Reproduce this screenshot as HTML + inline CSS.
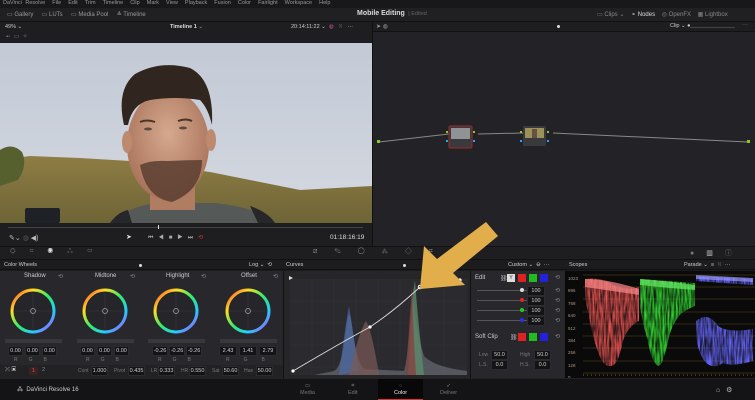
<!DOCTYPE html>
<html><head><meta charset="utf-8"><style>
*{margin:0;padding:0;box-sizing:border-box}
body{width:755px;height:400px;overflow:hidden;background:#1c1c1f;font-family:"Liberation Sans",sans-serif;color:#b8b8b8;font-size:6px;position:relative}
.a{position:absolute}
.t{position:absolute;white-space:nowrap}
.box{position:absolute;background:#141416;border:1px solid #2c2c30;color:#d0d0d0;font-size:5.5px;text-align:center;line-height:9px;height:10px}
.lbl{position:absolute;font-size:5px;color:#777}
</style></head><body>
<div class="a" style="left:0;top:0;width:755px;height:8px;background:#18181a"></div>
<div class="t" style="left:3px;top:0;font-size:5.5px;color:#999;word-spacing:2px">DaVinci Resolve &nbsp;File &nbsp;Edit &nbsp;Trim &nbsp;Timeline &nbsp;Clip &nbsp;Mark &nbsp;View &nbsp;Playback &nbsp;Fusion &nbsp;Color &nbsp;Fairlight &nbsp;Workspace &nbsp;Help</div>
<div class="a" style="left:0;top:8px;width:755px;height:14px;background:#202023;border-bottom:1px solid #111"></div>
<div class="t" style="left:7px;top:11px;font-size:6px;color:#999">▭ Gallery &nbsp;&nbsp;&nbsp; ▭ LUTs &nbsp;&nbsp;&nbsp; ▭ Media Pool &nbsp;&nbsp;&nbsp; ≛ Timeline</div>
<div class="t" style="left:357px;top:10px;font-size:7px;color:#ddd;font-weight:bold">Mobile Editing <span style="font-weight:normal;color:#666;font-size:5.5px">&nbsp;| Edited</span></div>
<div class="t" style="left:597px;top:11px;font-size:6px;color:#888">▭ Clips ⌄ &nbsp;&nbsp; <span style="color:#ddd">⚬ Nodes</span> &nbsp;&nbsp; ◎ OpenFX &nbsp;&nbsp; ▦ Lightbox</div>
<div class="a" style="left:0;top:22px;width:372px;height:20px;background:#1e1e21"></div>
<div class="t" style="left:5px;top:24px;font-size:5.5px;color:#ccc">49% ⌄</div>
<div class="t" style="left:170px;top:24px;font-size:5.5px;color:#ddd;font-weight:bold">Timeline 1 <span style="color:#777">⌄</span></div>
<div class="t" style="left:291px;top:24px;font-size:5.5px;color:#ccc">20:14:11:22 ⌄ &nbsp;<span style="color:#c5a">◍</span> &nbsp; ⁙ &nbsp; ···</div>
<div class="t" style="left:6px;top:33px;font-size:6px;color:#777">▪▫ &nbsp;▭ &nbsp;✧</div>
<svg class="a" style="left:0;top:43px" width="372" height="180" viewBox="0 43 372 180">
<defs><linearGradient id="sky" x1="0" y1="0" x2="0" y2="1"><stop offset="0" stop-color="#c3cad6"/><stop offset="1" stop-color="#d4d8e0"/></linearGradient>
<linearGradient id="hill" x1="0" y1="0" x2="0" y2="1"><stop offset="0" stop-color="#8e7d44"/><stop offset="1" stop-color="#6e6436"/></linearGradient>
<radialGradient id="skin" cx="0.5" cy="0.4" r="0.6"><stop offset="0" stop-color="#d6a98e"/><stop offset="1" stop-color="#a8725a"/></radialGradient></defs>
<rect x="0" y="43" width="372" height="180" fill="url(#sky)"/>
<path d="M0 160 L30 156 L80 158 L130 161 L210 172 L260 182 L300 190 L372 186 L372 223 L0 223Z" fill="url(#hill)"/>
<path d="M0 150 Q12 142 22 152 Q28 165 18 180 L0 186Z" fill="#55602e"/>
<rect x="25" y="208" width="35" height="15" rx="2" fill="#1e2226"/>
<path d="M110 223 Q130 205 160 203 L215 203 Q260 208 275 223Z" fill="#555a58"/>
<path d="M110 223 Q118 212 128 210 L132 223Z M250 206 Q268 212 275 223 L258 223Z" fill="#25272a"/>
<rect x="150" y="180" width="45" height="30" fill="#b07c62"/>
<ellipse cx="168" cy="145" rx="41" ry="55" fill="url(#skin)"/>
<ellipse cx="127" cy="142" rx="5" ry="11" fill="#bd8a70"/><ellipse cx="211" cy="140" rx="5" ry="11" fill="#bd8a70"/>
<path style="fill:#30261f" d="M124 125 Q116 90 135 74 Q160 60 190 68 Q214 80 212 125 Q208 108 200 100 Q175 96 150 100 Q132 104 128 125Z"/>
<path d="M140 165 Q150 160 168 161 Q188 160 202 160 Q202 190 172 202 Q146 198 140 165Z" fill="#5a3e30" opacity=".85"/>
<path d="M140 122 Q147 119 155 122 M178 121 Q186 118 192 121" stroke="#4a3428" stroke-width="2" fill="none"/>
<ellipse cx="148" cy="129" rx="4" ry="1.5" fill="#5b4a44"/><ellipse cx="183" cy="128" rx="4" ry="1.5" fill="#5b4a44"/>
</svg>
<div class="a" style="left:0;top:223px;width:372px;height:23px;background:#1e1e21"></div>
<div class="a" style="left:8px;top:227px;width:355px;height:1px;background:#444"></div>
<div class="a" style="left:158px;top:225px;width:1px;height:4px;background:#ddd"></div>
<div class="t" style="left:9px;top:234px;font-size:7px;color:#bbb">✎⌄ <span style="color:#555">◍</span> ◀)</div>
<div class="t" style="left:126px;top:233px;font-size:7px;color:#ddd">➤</div>
<div class="t" style="left:148px;top:234px;font-size:6px;color:#aaa;letter-spacing:5px">⏮◀■▶⏭<span style="color:#d33">⟲</span></div>
<div class="t" style="left:330px;top:234px;font-size:6.5px;color:#ddd">01:18:16:19</div>
<div class="a" style="left:372px;top:22px;width:1px;height:224px;background:#111"></div>
<div class="a" style="left:373px;top:22px;width:382px;height:10px;background:#1e1e21;border-bottom:1px solid #111"></div>
<div class="t" style="left:376px;top:23px;font-size:6px;color:#999">➤ ◍</div>
<div class="a" style="left:557px;top:25px;width:3px;height:3px;border-radius:50%;background:#ddd"></div>
<div class="t" style="left:670px;top:23px;font-size:5.5px;color:#ccc">Clip ⌄ ●</div>
<div class="a" style="left:690px;top:27px;width:45px;height:1px;background:#444"></div>
<div class="t" style="left:742px;top:22px;font-size:6px;color:#777">···</div>
<div class="a" style="left:373px;top:32px;width:382px;height:214px;background:#232327"></div>
<svg class="a" style="left:373px;top:32px" width="382" height="214">
<path d="M6 110 L76 102 M105 102 L150 101 M180 101 L375 110" stroke="#888" stroke-width="1" fill="none"/>
<rect x="4" y="108" width="3" height="3" fill="#8c2"/><rect x="374" y="108" width="3" height="3" fill="#8c2"/>
<rect x="76" y="94" width="23" height="22" rx="1.5" fill="#3a3a3e" stroke="#8a2a2a" stroke-width="1.2"/>
<rect x="78" y="96" width="19" height="11" fill="#8f9396"/>
<rect x="150" y="94" width="23" height="20" rx="1.5" fill="#3a3a3e"/>
<rect x="152" y="96" width="19" height="10" fill="#9a9258"/><rect x="159" y="97" width="5" height="9" fill="#6a5040"/>
<rect x="73" y="99" width="2" height="2" fill="#8c2"/><rect x="73" y="108" width="2" height="2" fill="#2ae"/>
<rect x="100" y="99" width="2" height="2" fill="#8c2"/><rect x="100" y="108" width="2" height="2" fill="#2ae"/>
<rect x="147" y="99" width="2" height="2" fill="#8c2"/><rect x="147" y="108" width="2" height="2" fill="#2ae"/>
<rect x="174" y="99" width="2" height="2" fill="#8c2"/><rect x="174" y="108" width="2" height="2" fill="#2ae"/>
</svg>
<div class="a" style="left:0;top:246px;width:755px;height:14px;background:#1e1e21;border-top:1px solid #111;border-bottom:1px solid #111"></div>
<div class="t" style="left:10px;top:248px;font-size:7px;color:#666;letter-spacing:14px">⛭⌗<span style="color:#ddd">◉</span>⁂▭</div>
<div class="t" style="left:313px;top:248px;font-size:7px;color:#888;letter-spacing:17px">⧄✎◯⁂◇⌗▭</div>
<div class="t" style="left:690px;top:248px;font-size:7px;color:#777;letter-spacing:12px">●<span style="color:#ccc">▥</span>ⓘ</div>
<div class="a" style="left:0;top:260px;width:755px;height:10px;background:#1c1c1f;border-bottom:1px solid #111"></div>
<div class="t" style="left:4px;top:262px;font-size:5.5px;color:#ccc">Color Wheels</div>
<div class="a" style="left:139px;top:264px;width:3px;height:3px;border-radius:50%;background:#ddd"></div>
<div class="t" style="left:249px;top:262px;font-size:5.5px;color:#ccc">Log ⌄ &nbsp;⟲</div>
<div class="t" style="left:286px;top:262px;font-size:5.5px;color:#ccc">Curves</div>
<div class="a" style="left:403px;top:264px;width:3px;height:3px;border-radius:50%;background:#ddd"></div>
<div class="t" style="left:508px;top:262px;font-size:5.5px;color:#ccc">Custom ⌄ &nbsp;⊖ &nbsp;···</div>
<div class="t" style="left:569px;top:262px;font-size:5.5px;color:#ccc">Scopes</div>
<div class="t" style="left:684px;top:262px;font-size:5.5px;color:#ccc">Parade ⌄ &nbsp;≡ &nbsp;⁙ &nbsp;···</div>
<div class="a" style="left:0;top:271px;width:283px;height:107px;background:#28282c"></div>
<svg class="a" style="left:0;top:271px" width="283" height="107">
<defs><linearGradient id="rb" x1="0" y1="0" x2="1" y2="1"><stop offset="0" stop-color="#f33"/><stop offset=".25" stop-color="#fd2"/><stop offset=".5" stop-color="#3e6"/><stop offset=".75" stop-color="#2cf"/><stop offset="1" stop-color="#c3f"/></linearGradient>
<g id="w"><circle r="21" fill="none" stroke="url(#rb)" stroke-width="3"/><circle r="19" fill="#26262a"/><path d="M0 -18 V18 M-18 0 H18" stroke="#3a3a3e" stroke-width=".6"/><circle r="2.5" fill="none" stroke="#aaa" stroke-width=".7"/></g></defs>
<use href="#w" x="33" y="40"/><use href="#w" x="105" y="40"/><use href="#w" x="176" y="40"/><use href="#w" x="248" y="40"/>
<rect x="5" y="68" width="57" height="4" fill="#38383c"/><rect x="77" y="68" width="57" height="4" fill="#38383c"/><rect x="148" y="68" width="57" height="4" fill="#38383c"/><rect x="220" y="68" width="57" height="4" fill="#38383c"/>
</svg>
<div class="t" style="left:24px;top:273px;font-size:6px;color:#ccc">Shadow</div>
<div class="t" style="left:95px;top:273px;font-size:6px;color:#ccc">Midtone</div>
<div class="t" style="left:166px;top:273px;font-size:6px;color:#ccc">Highlight</div>
<div class="t" style="left:241px;top:273px;font-size:6px;color:#ccc">Offset</div>
<div class="t" style="left:58px;top:273px;color:#888">⟲</div><div class="t" style="left:130px;top:273px;color:#888">⟲</div><div class="t" style="left:201px;top:273px;color:#888">⟲</div><div class="t" style="left:273px;top:273px;color:#888">⟲</div>
<div class="box" style="left:8px;top:346px;width:15px">0.00</div><div class="box" style="left:25px;top:346px;width:15px">0.00</div><div class="box" style="left:42px;top:346px;width:15px">0.00</div>
<div class="box" style="left:80px;top:346px;width:15px">0.00</div><div class="box" style="left:97px;top:346px;width:15px">0.00</div><div class="box" style="left:114px;top:346px;width:15px">0.00</div>
<div class="box" style="left:152px;top:346px;width:16px">-0.26</div><div class="box" style="left:169px;top:346px;width:16px">-0.26</div><div class="box" style="left:186px;top:346px;width:16px">-0.26</div>
<div class="box" style="left:219px;top:346px;width:18px">2.43</div><div class="box" style="left:239px;top:346px;width:18px">1.41</div><div class="box" style="left:259px;top:346px;width:18px">2.79</div>
<div class="lbl" style="left:14px;top:357px;letter-spacing:11px">RGB</div><div class="lbl" style="left:86px;top:357px;letter-spacing:11px">RGB</div><div class="lbl" style="left:158px;top:357px;letter-spacing:11px">RGB</div><div class="lbl" style="left:226px;top:357px;letter-spacing:14px">RGB</div>
<div class="a" style="left:0;top:365px;width:283px;height:13px;background:#222225"></div>
<div class="t" style="left:5px;top:367px;font-size:6px;color:#ccc">⤫ ▣</div>
<div class="a" style="left:29px;top:367px;width:9px;height:8px;background:#3a2222;color:#e55;font-size:5.5px;text-align:center;line-height:8px;border-radius:2px">1</div>
<div class="t" style="left:42px;top:367px;font-size:5.5px;color:#888">2</div>
<div class="t" style="left:78px;top:368px;font-size:5px;color:#777">Cont</div><div class="box" style="left:91px;top:366px;width:17px">1.000</div>
<div class="t" style="left:114px;top:368px;font-size:5px;color:#777">Pivot</div><div class="box" style="left:128px;top:366px;width:17px">0.435</div>
<div class="t" style="left:151px;top:368px;font-size:5px;color:#777">LR</div><div class="box" style="left:158px;top:366px;width:17px">0.333</div>
<div class="t" style="left:181px;top:368px;font-size:5px;color:#777">HR</div><div class="box" style="left:189px;top:366px;width:17px">0.550</div>
<div class="t" style="left:212px;top:368px;font-size:5px;color:#777">Sat</div><div class="box" style="left:222px;top:366px;width:17px">50.60</div>
<div class="t" style="left:244px;top:368px;font-size:5px;color:#777">Hue</div><div class="box" style="left:256px;top:366px;width:17px">50.00</div>
<div class="a" style="left:283px;top:271px;width:1px;height:107px;background:#111"></div>
<div class="a" style="left:284px;top:271px;width:186px;height:107px;background:#262629"></div>
<svg class="a" style="left:284px;top:271px" width="186" height="107">
<rect x="6" y="8" width="177" height="96" fill="#2b2b2f"/>
<path d="M28 8V104M50 8V104M72 8V104M94 8V104M116 8V104M138 8V104M160 8V104M6 30H183M6 52H183M6 74H183M6 96H183" stroke="#333338" stroke-width=".6"/>
<path d="M30 104 L50 100 Q58 96 62 60 Q65 30 68 55 Q72 90 80 98 L120 100 Q124 90 128 20 Q132 60 140 85 Q150 96 183 100 L183 104Z" fill="#8a8e98" opacity=".45"/>
<path d="M55 104 Q62 50 65 35 Q68 55 75 100Z" fill="#4a6aa8" opacity=".7"/>
<path d="M65 104 Q75 60 82 50 Q88 60 95 104Z" fill="#7a5a55" opacity=".7"/>
<path d="M124 104 Q128 20 131 10 Q134 50 140 104Z" fill="#5c8a6a" opacity=".8"/>
<path d="M122 104 Q126 40 128 15 Q129 60 132 104Z" fill="#8a3a3a" opacity=".7"/>
<path d="M9 100 Q60 70 86 56 Q110 40 136 16 Q150 10 175 9" stroke="#ddd" stroke-width=".9" fill="none"/>
<circle cx="9" cy="100" r="1.6" fill="#fff"/><circle cx="86" cy="56" r="1.6" fill="#fff"/><circle cx="136" cy="16" r="1.8" fill="none" stroke="#fff"/><circle cx="176" cy="9" r="1.6" fill="#fff"/>
<path d="M5 5 L9 7 L5 9Z" fill="#ddd"/>
</svg>
<div class="a" style="left:470px;top:271px;width:1px;height:107px;background:#111"></div>
<div class="a" style="left:471px;top:271px;width:94px;height:107px;background:#28282c"></div>
<div class="t" style="left:475px;top:275px;font-size:6px;color:#ccc">Edit</div>
<div class="t" style="left:500px;top:275px;font-size:6px;color:#bbb">⛓</div>
<div class="a" style="left:507px;top:274px;width:8px;height:8px;background:#ddd;color:#333;font-size:5px;text-align:center;line-height:8px">Y</div>
<div class="a" style="left:518px;top:274px;width:8px;height:8px;background:#d22"></div>
<div class="a" style="left:529px;top:274px;width:8px;height:8px;background:#2b2"></div>
<div class="a" style="left:540px;top:274px;width:8px;height:8px;background:#22d"></div>
<div class="t" style="left:555px;top:274px;color:#888">⟲</div>
<div class="a" style="left:477px;top:290px;width:50px;height:1px;background:#555"></div><div class="a" style="left:520px;top:288px;width:4px;height:4px;border-radius:50%;background:#ddd"></div>
<div class="a" style="left:477px;top:300px;width:50px;height:1px;background:#555"></div><div class="a" style="left:520px;top:298px;width:4px;height:4px;border-radius:50%;background:#e22"></div>
<div class="a" style="left:477px;top:310px;width:50px;height:1px;background:#555"></div><div class="a" style="left:520px;top:308px;width:4px;height:4px;border-radius:50%;background:#2c2"></div>
<div class="a" style="left:477px;top:320px;width:50px;height:1px;background:#555"></div><div class="a" style="left:520px;top:318px;width:4px;height:4px;border-radius:50%;background:#23e"></div>
<div class="box" style="left:527px;top:286px;width:18px">100</div><div class="box" style="left:527px;top:296px;width:18px">100</div><div class="box" style="left:527px;top:306px;width:18px">100</div><div class="box" style="left:527px;top:316px;width:18px">100</div>
<div class="t" style="left:555px;top:286px;color:#888;line-height:10px">⟲<br>⟲<br>⟲<br>⟲</div>
<div class="t" style="left:475px;top:334px;font-size:6px;color:#ccc">Soft Clip</div>
<div class="t" style="left:510px;top:334px;font-size:6px;color:#bbb">⛓</div>
<div class="a" style="left:518px;top:333px;width:8px;height:8px;background:#d22"></div>
<div class="a" style="left:529px;top:333px;width:8px;height:8px;background:#2b2"></div>
<div class="a" style="left:540px;top:333px;width:8px;height:8px;background:#22d"></div>
<div class="t" style="left:555px;top:333px;color:#888">⟲</div>
<div class="t" style="left:479px;top:352px;font-size:5px;color:#777">Low</div><div class="box" style="left:491px;top:350px;width:17px">50.0</div>
<div class="t" style="left:520px;top:352px;font-size:5px;color:#777">High</div><div class="box" style="left:534px;top:350px;width:17px">50.0</div>
<div class="t" style="left:479px;top:362px;font-size:5px;color:#777">L.S.</div><div class="box" style="left:491px;top:360px;width:17px">0.0</div>
<div class="t" style="left:520px;top:362px;font-size:5px;color:#777">H.S.</div><div class="box" style="left:534px;top:360px;width:17px">0.0</div>
<div class="a" style="left:565px;top:271px;width:190px;height:107px;background:#0a0a0a"></div>
<div class="t" style="left:568px;top:273px;font-size:4.5px;color:#a98;line-height:12.4px">1023<br>896<br>768<br>640<br>512<br>384<br>256<br>128<br>0</div>
<svg class="a" style="left:583px;top:271px" width="172" height="107">
<defs><filter id="n"><feTurbulence type="fractalNoise" baseFrequency="0.6 0.06" numOctaves="2" seed="3"/><feColorMatrix values="0 0 0 0 1  0 0 0 0 1  0 0 0 0 1  0 0 0 1.6 -0.25"/><feComposite in="SourceGraphic" operator="in"/></filter></defs>
<path d="M0 4H172M0 16H172M0 28H172M0 41H172M0 53H172M0 65H172M0 77H172M0 90H172M0 102H172" stroke="#5a4a1a" stroke-width=".6"/>
<g filter="url(#n)">
<path d="M2 8 Q20 6 30 14 Q45 20 56 16 L56 50 Q45 55 40 70 Q35 95 28 95 Q22 96 18 88 Q10 70 6 45 Q2 30 2 20Z" fill="#e55"/>
<path d="M57 8 L112 12 L112 35 Q100 40 96 45 Q88 55 85 70 Q80 95 75 95 Q68 90 65 70 Q60 55 57 35Z" fill="#3d3"/>
<path d="M113 5 L170 8 L170 14 L113 10Z M113 50 Q125 40 135 55 Q145 62 170 58 L170 90 Q150 96 140 92 Q128 100 120 88 Q113 75 113 60Z" fill="#66f"/>
</g>
<path d="M2 8 Q25 8 56 18 L56 24 Q30 20 2 16Z" fill="#f88" opacity=".7"/>
<path d="M57 8 Q85 10 112 14 L112 19 Q85 17 57 14Z" fill="#6e6" opacity=".7"/>
<path d="M113 4 L170 7 L170 11 L113 8Z" fill="#99f" opacity=".7"/>
<path d="M0 104H172" stroke="#7a6a2a" stroke-dasharray="1 3"/>
</svg>
<svg class="a" style="left:400px;top:215px" width="110" height="85">
<polygon points="86,7 98,21 53,58 65,70 20,74 24,31 37,44" fill="#e2ae4c"/>
</svg>
<div class="a" style="left:0;top:378px;width:755px;height:22px;background:#141416;border-top:1px solid #222"></div>
<div class="t" style="left:17px;top:386px;font-size:6px;color:#ccc">⁂ &nbsp;DaVinci Resolve 16</div>
<div class="t" style="left:300px;top:383px;font-size:5.5px;color:#777;text-align:center;line-height:7px">▭<br>Media</div>
<div class="t" style="left:348px;top:383px;font-size:5.5px;color:#777;text-align:center;line-height:7px">⌗<br>Edit</div>
<div class="a" style="left:378px;top:379px;width:45px;height:21px;background:#080808;border-bottom:1px solid #d33"></div>
<div class="t" style="left:394px;top:383px;font-size:5.5px;color:#eee;text-align:center;line-height:7px"><span style="color:#c8a">◌</span><br>Color</div>
<div class="t" style="left:440px;top:383px;font-size:5.5px;color:#777;text-align:center;line-height:7px">➶<br>Deliver</div>
<div class="t" style="left:716px;top:386px;font-size:7px;color:#bbb">⌂ &nbsp;&nbsp;⚙</div>
</body></html>
